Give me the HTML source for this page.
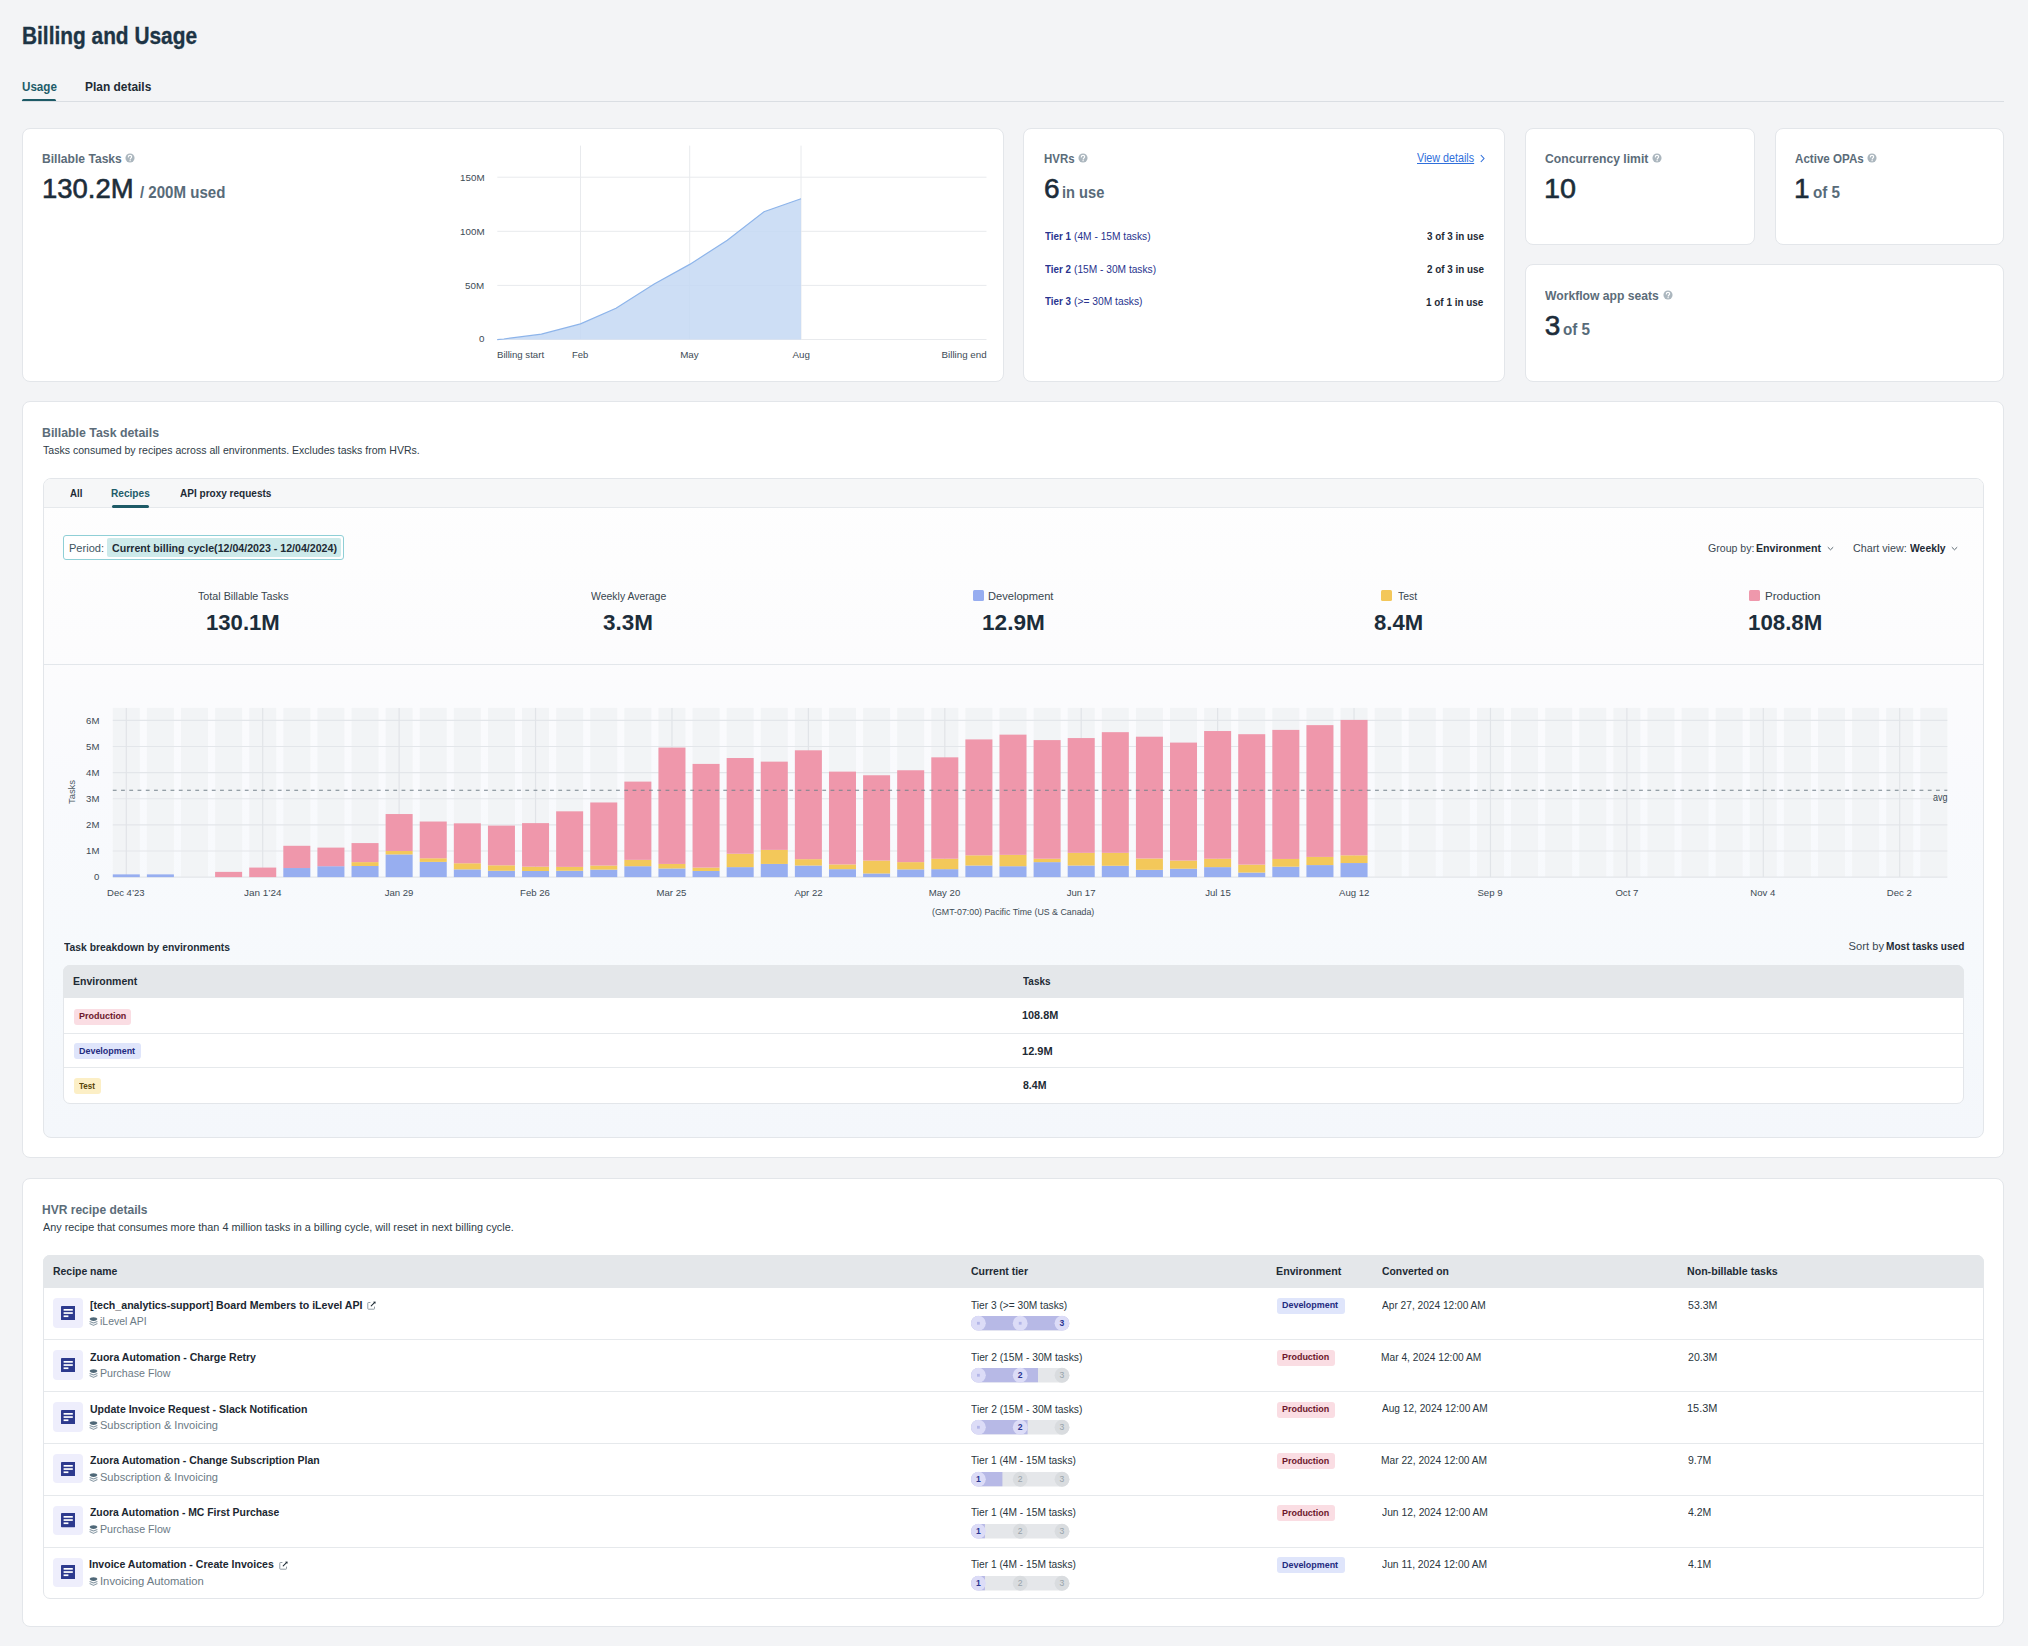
<!DOCTYPE html>
<html><head><meta charset="utf-8"><title>Billing and Usage</title>
<style>
html,body{margin:0;padding:0;}
body{width:2028px;height:1646px;position:relative;overflow:hidden;background:#f3f4f6;font-family:"Liberation Sans",sans-serif;}
.t{position:absolute;white-space:pre;line-height:1;transform-origin:0 0;}
</style></head><body>
<div style="position:absolute;left:22px;top:98.5px;width:33.5px;height:3.0px;background:#1d5a66;border-radius:2px"></div>
<div style="position:absolute;left:22px;top:101px;width:1982px;height:1px;background:#dadee3"></div>
<div style="position:absolute;left:22px;top:128px;width:982px;height:254px;background:#fff;border:1px solid #e3e6ea;border-radius:8px;box-sizing:border-box"></div>
<div style="position:absolute;left:1023px;top:128px;width:482px;height:254px;background:#fff;border:1px solid #e3e6ea;border-radius:8px;box-sizing:border-box"></div>
<div style="position:absolute;left:1525px;top:128px;width:230px;height:117px;background:#fff;border:1px solid #e3e6ea;border-radius:8px;box-sizing:border-box"></div>
<div style="position:absolute;left:1775px;top:128px;width:229px;height:117px;background:#fff;border:1px solid #e3e6ea;border-radius:8px;box-sizing:border-box"></div>
<div style="position:absolute;left:1525px;top:264px;width:479px;height:118px;background:#fff;border:1px solid #e3e6ea;border-radius:8px;box-sizing:border-box"></div>
<svg style="position:absolute;left:125px;top:152.9px" width="10" height="10" viewBox="0 0 10 10"><circle cx="5" cy="5" r="4.55" fill="#abb6be"/><path d="M3.3 3.9C3.3 2.9 4.1 2.3 5 2.3C5.9 2.3 6.7 2.9 6.7 3.8C6.7 4.9 5.2 5 5.2 6.1" stroke="#fff" stroke-width="1.15" fill="none" stroke-linecap="round"/><circle cx="5.1" cy="7.65" r=".7" fill="#fff"/></svg>
<svg style="position:absolute;left:0;top:0" width="2028" height="400"><line x1="497.3" y1="177.2" x2="986.5" y2="177.2" stroke="#e8eaed" stroke-width="1"/><line x1="497.3" y1="231.3" x2="986.5" y2="231.3" stroke="#e8eaed" stroke-width="1"/><line x1="497.3" y1="285.4" x2="986.5" y2="285.4" stroke="#e8eaed" stroke-width="1"/><line x1="497.3" y1="339.5" x2="986.5" y2="339.5" stroke="#e8eaed" stroke-width="1"/><line x1="580.5" y1="145.6" x2="580.5" y2="339.5" stroke="#e8eaed" stroke-width="1"/><line x1="689.7" y1="145.6" x2="689.7" y2="339.5" stroke="#e8eaed" stroke-width="1"/><line x1="801.0" y1="145.6" x2="801.0" y2="339.5" stroke="#e8eaed" stroke-width="1"/><path d="M497.2,339.6 L503.8,339.0 L541.4,334.2 L580.5,323.9 L616.0,308.3 L654.2,283.9 L689.7,264.4 L727.3,240.3 L764.0,211.7 L801.0,198.8 L801,339.5 L497.2,339.5 Z" fill="#c4d8f3" fill-opacity="0.85"/><path d="M497.2,339.6 L503.8,339.0 L541.4,334.2 L580.5,323.9 L616.0,308.3 L654.2,283.9 L689.7,264.4 L727.3,240.3 L764.0,211.7 L801.0,198.8" fill="none" stroke="#8db4ea" stroke-width="1.2"/></svg>
<svg style="position:absolute;left:1078.2px;top:152.9px" width="10" height="10" viewBox="0 0 10 10"><circle cx="5" cy="5" r="4.55" fill="#abb6be"/><path d="M3.3 3.9C3.3 2.9 4.1 2.3 5 2.3C5.9 2.3 6.7 2.9 6.7 3.8C6.7 4.9 5.2 5 5.2 6.1" stroke="#fff" stroke-width="1.15" fill="none" stroke-linecap="round"/><circle cx="5.1" cy="7.65" r=".7" fill="#fff"/></svg>
<svg style="position:absolute;left:1478.5px;top:154px" width="7" height="9" viewBox="0 0 7 9"><path d="M1.8 1 L5 4.5 L1.8 8" stroke="#2f6fdb" stroke-width="1.1" fill="none"/></svg>
<svg style="position:absolute;left:1652.2px;top:152.9px" width="10" height="10" viewBox="0 0 10 10"><circle cx="5" cy="5" r="4.55" fill="#abb6be"/><path d="M3.3 3.9C3.3 2.9 4.1 2.3 5 2.3C5.9 2.3 6.7 2.9 6.7 3.8C6.7 4.9 5.2 5 5.2 6.1" stroke="#fff" stroke-width="1.15" fill="none" stroke-linecap="round"/><circle cx="5.1" cy="7.65" r=".7" fill="#fff"/></svg>
<svg style="position:absolute;left:1867px;top:152.9px" width="10" height="10" viewBox="0 0 10 10"><circle cx="5" cy="5" r="4.55" fill="#abb6be"/><path d="M3.3 3.9C3.3 2.9 4.1 2.3 5 2.3C5.9 2.3 6.7 2.9 6.7 3.8C6.7 4.9 5.2 5 5.2 6.1" stroke="#fff" stroke-width="1.15" fill="none" stroke-linecap="round"/><circle cx="5.1" cy="7.65" r=".7" fill="#fff"/></svg>
<svg style="position:absolute;left:1662.5px;top:289.79999999999995px" width="10" height="10" viewBox="0 0 10 10"><circle cx="5" cy="5" r="4.55" fill="#abb6be"/><path d="M3.3 3.9C3.3 2.9 4.1 2.3 5 2.3C5.9 2.3 6.7 2.9 6.7 3.8C6.7 4.9 5.2 5 5.2 6.1" stroke="#fff" stroke-width="1.15" fill="none" stroke-linecap="round"/><circle cx="5.1" cy="7.65" r=".7" fill="#fff"/></svg>
<div style="position:absolute;left:22px;top:401px;width:1982px;height:757px;background:#fff;border:1px solid #e3e6ea;border-radius:8px;box-sizing:border-box"></div>
<div style="position:absolute;left:42.8px;top:478px;width:1941.5px;height:660px;border:1px solid #e3e6ea;border-radius:8px;box-sizing:border-box;background:linear-gradient(180deg,#fefefe 0%,#fcfcfd 25%,#f9fafd 45%,#f6f9fc 75%,#f4f7fb 100%);overflow:hidden"></div>
<div style="position:absolute;left:43.8px;top:479px;width:1939.5px;height:29px;background:#f6f7f8;border-radius:7px 7px 0 0;border-bottom:1px solid #e6e9ec;box-sizing:border-box"></div>
<div style="position:absolute;left:111.9px;top:505.1px;width:37.29999999999998px;height:2.5px;background:#1d5a66;border-radius:2px"></div>
<div style="position:absolute;left:63.4px;top:534.7px;width:281.1px;height:25.699999999999932px;border:1px solid #8fcfd6;border-radius:3px;background:#fff;box-sizing:border-box"></div>
<div style="position:absolute;left:107px;top:537.9px;width:234.2px;height:19.5px;background:#cdeaea;border-radius:2px"></div>
<svg style="position:absolute;left:1826.7px;top:546px" width="7" height="5" viewBox="0 0 7 5"><path d="M0.8 1.2 L3.5 3.8 L6.2 1.2" stroke="#5a6770" stroke-width="1" fill="none"/></svg>
<svg style="position:absolute;left:1951.1px;top:546px" width="7" height="5" viewBox="0 0 7 5"><path d="M0.8 1.2 L3.5 3.8 L6.2 1.2" stroke="#5a6770" stroke-width="1" fill="none"/></svg>
<div style="position:absolute;left:973.3px;top:590.1px;width:11.200000000000045px;height:11.199999999999932px;background:#97adf0;border-radius:1.5px"></div>
<div style="position:absolute;left:1381.2px;top:590.1px;width:11.200000000000045px;height:11.199999999999932px;background:#f3c75a;border-radius:1.5px"></div>
<div style="position:absolute;left:1749.3px;top:590.1px;width:11.200000000000045px;height:11.199999999999932px;background:#ef98ac;border-radius:1.5px"></div>
<div style="position:absolute;left:43.8px;top:663.5px;width:1939.5px;height:1.2999999999999545px;background:#e3e7eb"></div>
<svg style="position:absolute;left:0;top:0" width="2028" height="1000"><rect x="112.80" y="707.9" width="27.0" height="169.20" fill="#f2f4f6"/><rect x="146.90" y="707.9" width="27.0" height="169.20" fill="#f2f4f6"/><rect x="181.01" y="707.9" width="27.0" height="169.20" fill="#f2f4f6"/><rect x="215.11" y="707.9" width="27.0" height="169.20" fill="#f2f4f6"/><rect x="249.22" y="707.9" width="27.0" height="169.20" fill="#f2f4f6"/><rect x="283.32" y="707.9" width="27.0" height="169.20" fill="#f2f4f6"/><rect x="317.42" y="707.9" width="27.0" height="169.20" fill="#f2f4f6"/><rect x="351.53" y="707.9" width="27.0" height="169.20" fill="#f2f4f6"/><rect x="385.63" y="707.9" width="27.0" height="169.20" fill="#f2f4f6"/><rect x="419.74" y="707.9" width="27.0" height="169.20" fill="#f2f4f6"/><rect x="453.84" y="707.9" width="27.0" height="169.20" fill="#f2f4f6"/><rect x="487.94" y="707.9" width="27.0" height="169.20" fill="#f2f4f6"/><rect x="522.05" y="707.9" width="27.0" height="169.20" fill="#f2f4f6"/><rect x="556.15" y="707.9" width="27.0" height="169.20" fill="#f2f4f6"/><rect x="590.26" y="707.9" width="27.0" height="169.20" fill="#f2f4f6"/><rect x="624.36" y="707.9" width="27.0" height="169.20" fill="#f2f4f6"/><rect x="658.46" y="707.9" width="27.0" height="169.20" fill="#f2f4f6"/><rect x="692.57" y="707.9" width="27.0" height="169.20" fill="#f2f4f6"/><rect x="726.67" y="707.9" width="27.0" height="169.20" fill="#f2f4f6"/><rect x="760.78" y="707.9" width="27.0" height="169.20" fill="#f2f4f6"/><rect x="794.88" y="707.9" width="27.0" height="169.20" fill="#f2f4f6"/><rect x="828.98" y="707.9" width="27.0" height="169.20" fill="#f2f4f6"/><rect x="863.09" y="707.9" width="27.0" height="169.20" fill="#f2f4f6"/><rect x="897.19" y="707.9" width="27.0" height="169.20" fill="#f2f4f6"/><rect x="931.30" y="707.9" width="27.0" height="169.20" fill="#f2f4f6"/><rect x="965.40" y="707.9" width="27.0" height="169.20" fill="#f2f4f6"/><rect x="999.50" y="707.9" width="27.0" height="169.20" fill="#f2f4f6"/><rect x="1033.61" y="707.9" width="27.0" height="169.20" fill="#f2f4f6"/><rect x="1067.71" y="707.9" width="27.0" height="169.20" fill="#f2f4f6"/><rect x="1101.82" y="707.9" width="27.0" height="169.20" fill="#f2f4f6"/><rect x="1135.92" y="707.9" width="27.0" height="169.20" fill="#f2f4f6"/><rect x="1170.02" y="707.9" width="27.0" height="169.20" fill="#f2f4f6"/><rect x="1204.13" y="707.9" width="27.0" height="169.20" fill="#f2f4f6"/><rect x="1238.23" y="707.9" width="27.0" height="169.20" fill="#f2f4f6"/><rect x="1272.34" y="707.9" width="27.0" height="169.20" fill="#f2f4f6"/><rect x="1306.44" y="707.9" width="27.0" height="169.20" fill="#f2f4f6"/><rect x="1340.54" y="707.9" width="27.0" height="169.20" fill="#f2f4f6"/><rect x="1374.65" y="707.9" width="27.0" height="169.20" fill="#f2f4f6"/><rect x="1408.75" y="707.9" width="27.0" height="169.20" fill="#f2f4f6"/><rect x="1442.86" y="707.9" width="27.0" height="169.20" fill="#f2f4f6"/><rect x="1476.96" y="707.9" width="27.0" height="169.20" fill="#f2f4f6"/><rect x="1511.06" y="707.9" width="27.0" height="169.20" fill="#f2f4f6"/><rect x="1545.17" y="707.9" width="27.0" height="169.20" fill="#f2f4f6"/><rect x="1579.27" y="707.9" width="27.0" height="169.20" fill="#f2f4f6"/><rect x="1613.38" y="707.9" width="27.0" height="169.20" fill="#f2f4f6"/><rect x="1647.48" y="707.9" width="27.0" height="169.20" fill="#f2f4f6"/><rect x="1681.58" y="707.9" width="27.0" height="169.20" fill="#f2f4f6"/><rect x="1715.69" y="707.9" width="27.0" height="169.20" fill="#f2f4f6"/><rect x="1749.79" y="707.9" width="27.0" height="169.20" fill="#f2f4f6"/><rect x="1783.90" y="707.9" width="27.0" height="169.20" fill="#f2f4f6"/><rect x="1818.00" y="707.9" width="27.0" height="169.20" fill="#f2f4f6"/><rect x="1852.10" y="707.9" width="27.0" height="169.20" fill="#f2f4f6"/><rect x="1886.21" y="707.9" width="27.0" height="169.20" fill="#f2f4f6"/><rect x="1920.31" y="707.9" width="27.0" height="169.20" fill="#f2f4f6"/><line x1="112.80" y1="877.10" x2="1947.31" y2="877.10" stroke="#e3e6ea" stroke-width="1.2"/><line x1="112.80" y1="850.98" x2="1947.31" y2="850.98" stroke="#e3e6ea" stroke-width="1.2"/><line x1="112.80" y1="824.86" x2="1947.31" y2="824.86" stroke="#e3e6ea" stroke-width="1.2"/><line x1="112.80" y1="798.74" x2="1947.31" y2="798.74" stroke="#e3e6ea" stroke-width="1.2"/><line x1="112.80" y1="772.62" x2="1947.31" y2="772.62" stroke="#e3e6ea" stroke-width="1.2"/><line x1="112.80" y1="746.50" x2="1947.31" y2="746.50" stroke="#e3e6ea" stroke-width="1.2"/><line x1="112.80" y1="720.38" x2="1947.31" y2="720.38" stroke="#e3e6ea" stroke-width="1.2"/><line x1="126.30" y1="707.9" x2="126.30" y2="877.1" stroke="#e1e4e8" stroke-width="1.2"/><line x1="262.72" y1="707.9" x2="262.72" y2="877.1" stroke="#e1e4e8" stroke-width="1.2"/><line x1="399.13" y1="707.9" x2="399.13" y2="877.1" stroke="#e1e4e8" stroke-width="1.2"/><line x1="535.55" y1="707.9" x2="535.55" y2="877.1" stroke="#e1e4e8" stroke-width="1.2"/><line x1="671.96" y1="707.9" x2="671.96" y2="877.1" stroke="#e1e4e8" stroke-width="1.2"/><line x1="808.38" y1="707.9" x2="808.38" y2="877.1" stroke="#e1e4e8" stroke-width="1.2"/><line x1="944.80" y1="707.9" x2="944.80" y2="877.1" stroke="#e1e4e8" stroke-width="1.2"/><line x1="1081.21" y1="707.9" x2="1081.21" y2="877.1" stroke="#e1e4e8" stroke-width="1.2"/><line x1="1217.63" y1="707.9" x2="1217.63" y2="877.1" stroke="#e1e4e8" stroke-width="1.2"/><line x1="1354.04" y1="707.9" x2="1354.04" y2="877.1" stroke="#e1e4e8" stroke-width="1.2"/><line x1="1490.46" y1="707.9" x2="1490.46" y2="877.1" stroke="#e1e4e8" stroke-width="1.2"/><line x1="1626.88" y1="707.9" x2="1626.88" y2="877.1" stroke="#e1e4e8" stroke-width="1.2"/><line x1="1763.29" y1="707.9" x2="1763.29" y2="877.1" stroke="#e1e4e8" stroke-width="1.2"/><line x1="1899.71" y1="707.9" x2="1899.71" y2="877.1" stroke="#e1e4e8" stroke-width="1.2"/><rect x="112.80" y="874.38" width="27.0" height="2.72" fill="#97aef0"/><rect x="146.90" y="874.38" width="27.0" height="2.72" fill="#97aef0"/><rect x="215.11" y="871.88" width="27.0" height="5.22" fill="#ef97ab"/><rect x="249.22" y="867.57" width="27.0" height="9.53" fill="#ef97ab"/><rect x="283.32" y="868.03" width="27.0" height="9.07" fill="#97aef0"/><rect x="283.32" y="845.80" width="27.0" height="22.23" fill="#ef97ab"/><rect x="317.42" y="866.21" width="27.0" height="10.89" fill="#97aef0"/><rect x="317.42" y="847.61" width="27.0" height="18.60" fill="#ef97ab"/><rect x="351.53" y="865.99" width="27.0" height="11.11" fill="#97aef0"/><rect x="351.53" y="862.13" width="27.0" height="3.86" fill="#f3c85a"/><rect x="351.53" y="843.08" width="27.0" height="19.05" fill="#ef97ab"/><rect x="385.63" y="854.42" width="27.0" height="22.68" fill="#97aef0"/><rect x="385.63" y="851.02" width="27.0" height="3.40" fill="#f3c85a"/><rect x="385.63" y="814.04" width="27.0" height="36.97" fill="#ef97ab"/><rect x="419.74" y="861.90" width="27.0" height="15.20" fill="#97aef0"/><rect x="419.74" y="858.27" width="27.0" height="3.63" fill="#f3c85a"/><rect x="419.74" y="821.53" width="27.0" height="36.75" fill="#ef97ab"/><rect x="453.84" y="869.39" width="27.0" height="7.71" fill="#97aef0"/><rect x="453.84" y="863.26" width="27.0" height="6.12" fill="#f3c85a"/><rect x="453.84" y="823.34" width="27.0" height="39.92" fill="#ef97ab"/><rect x="487.94" y="870.75" width="27.0" height="6.35" fill="#97aef0"/><rect x="487.94" y="865.31" width="27.0" height="5.44" fill="#f3c85a"/><rect x="487.94" y="825.61" width="27.0" height="39.69" fill="#ef97ab"/><rect x="522.05" y="870.98" width="27.0" height="6.12" fill="#97aef0"/><rect x="522.05" y="866.67" width="27.0" height="4.31" fill="#f3c85a"/><rect x="522.05" y="823.12" width="27.0" height="43.55" fill="#ef97ab"/><rect x="556.15" y="870.75" width="27.0" height="6.35" fill="#97aef0"/><rect x="556.15" y="866.89" width="27.0" height="3.86" fill="#f3c85a"/><rect x="556.15" y="811.32" width="27.0" height="55.57" fill="#ef97ab"/><rect x="590.26" y="869.61" width="27.0" height="7.49" fill="#97aef0"/><rect x="590.26" y="865.53" width="27.0" height="4.08" fill="#f3c85a"/><rect x="590.26" y="802.47" width="27.0" height="63.06" fill="#ef97ab"/><rect x="624.36" y="866.21" width="27.0" height="10.89" fill="#97aef0"/><rect x="624.36" y="859.86" width="27.0" height="6.35" fill="#f3c85a"/><rect x="624.36" y="781.61" width="27.0" height="78.25" fill="#ef97ab"/><rect x="658.46" y="868.48" width="27.0" height="8.62" fill="#97aef0"/><rect x="658.46" y="863.94" width="27.0" height="4.54" fill="#f3c85a"/><rect x="658.46" y="747.58" width="27.0" height="116.36" fill="#ef97ab"/><rect x="692.57" y="870.98" width="27.0" height="6.12" fill="#97aef0"/><rect x="692.57" y="867.57" width="27.0" height="3.40" fill="#f3c85a"/><rect x="692.57" y="763.91" width="27.0" height="103.66" fill="#ef97ab"/><rect x="726.67" y="867.12" width="27.0" height="9.98" fill="#97aef0"/><rect x="726.67" y="853.74" width="27.0" height="13.38" fill="#f3c85a"/><rect x="726.67" y="758.02" width="27.0" height="95.72" fill="#ef97ab"/><rect x="760.78" y="863.94" width="27.0" height="13.16" fill="#97aef0"/><rect x="760.78" y="849.88" width="27.0" height="14.06" fill="#f3c85a"/><rect x="760.78" y="761.65" width="27.0" height="88.23" fill="#ef97ab"/><rect x="794.88" y="865.53" width="27.0" height="11.57" fill="#97aef0"/><rect x="794.88" y="859.18" width="27.0" height="6.35" fill="#f3c85a"/><rect x="794.88" y="750.31" width="27.0" height="108.88" fill="#ef97ab"/><rect x="828.98" y="869.16" width="27.0" height="7.94" fill="#97aef0"/><rect x="828.98" y="864.40" width="27.0" height="4.76" fill="#f3c85a"/><rect x="828.98" y="771.63" width="27.0" height="92.77" fill="#ef97ab"/><rect x="863.09" y="873.47" width="27.0" height="3.63" fill="#97aef0"/><rect x="863.09" y="860.54" width="27.0" height="12.93" fill="#f3c85a"/><rect x="863.09" y="775.26" width="27.0" height="85.29" fill="#ef97ab"/><rect x="897.19" y="869.39" width="27.0" height="7.71" fill="#97aef0"/><rect x="897.19" y="862.13" width="27.0" height="7.26" fill="#f3c85a"/><rect x="897.19" y="770.27" width="27.0" height="91.86" fill="#ef97ab"/><rect x="931.30" y="869.16" width="27.0" height="7.94" fill="#97aef0"/><rect x="931.30" y="858.73" width="27.0" height="10.43" fill="#f3c85a"/><rect x="931.30" y="757.34" width="27.0" height="101.39" fill="#ef97ab"/><rect x="965.40" y="865.53" width="27.0" height="11.57" fill="#97aef0"/><rect x="965.40" y="855.32" width="27.0" height="10.21" fill="#f3c85a"/><rect x="965.40" y="739.42" width="27.0" height="115.91" fill="#ef97ab"/><rect x="999.50" y="866.21" width="27.0" height="10.89" fill="#97aef0"/><rect x="999.50" y="854.87" width="27.0" height="11.34" fill="#f3c85a"/><rect x="999.50" y="734.65" width="27.0" height="120.22" fill="#ef97ab"/><rect x="1033.61" y="862.13" width="27.0" height="14.97" fill="#97aef0"/><rect x="1033.61" y="858.73" width="27.0" height="3.40" fill="#f3c85a"/><rect x="1033.61" y="740.10" width="27.0" height="118.63" fill="#ef97ab"/><rect x="1067.71" y="865.53" width="27.0" height="11.57" fill="#97aef0"/><rect x="1067.71" y="852.83" width="27.0" height="12.70" fill="#f3c85a"/><rect x="1067.71" y="738.06" width="27.0" height="114.77" fill="#ef97ab"/><rect x="1101.82" y="865.76" width="27.0" height="11.34" fill="#97aef0"/><rect x="1101.82" y="852.83" width="27.0" height="12.93" fill="#f3c85a"/><rect x="1101.82" y="732.16" width="27.0" height="120.67" fill="#ef97ab"/><rect x="1135.92" y="869.84" width="27.0" height="7.26" fill="#97aef0"/><rect x="1135.92" y="858.50" width="27.0" height="11.34" fill="#f3c85a"/><rect x="1135.92" y="736.70" width="27.0" height="121.80" fill="#ef97ab"/><rect x="1170.02" y="868.71" width="27.0" height="8.39" fill="#97aef0"/><rect x="1170.02" y="860.54" width="27.0" height="8.17" fill="#f3c85a"/><rect x="1170.02" y="742.59" width="27.0" height="117.95" fill="#ef97ab"/><rect x="1204.13" y="867.12" width="27.0" height="9.98" fill="#97aef0"/><rect x="1204.13" y="858.73" width="27.0" height="8.39" fill="#f3c85a"/><rect x="1204.13" y="731.03" width="27.0" height="127.70" fill="#ef97ab"/><rect x="1238.23" y="872.56" width="27.0" height="4.54" fill="#97aef0"/><rect x="1238.23" y="864.62" width="27.0" height="7.94" fill="#f3c85a"/><rect x="1238.23" y="734.20" width="27.0" height="130.42" fill="#ef97ab"/><rect x="1272.34" y="866.67" width="27.0" height="10.43" fill="#97aef0"/><rect x="1272.34" y="858.95" width="27.0" height="7.71" fill="#f3c85a"/><rect x="1272.34" y="729.89" width="27.0" height="129.06" fill="#ef97ab"/><rect x="1306.44" y="865.08" width="27.0" height="12.02" fill="#97aef0"/><rect x="1306.44" y="856.91" width="27.0" height="8.17" fill="#f3c85a"/><rect x="1306.44" y="725.13" width="27.0" height="131.78" fill="#ef97ab"/><rect x="1340.54" y="863.04" width="27.0" height="14.06" fill="#97aef0"/><rect x="1340.54" y="855.32" width="27.0" height="7.71" fill="#f3c85a"/><rect x="1340.54" y="719.91" width="27.0" height="135.41" fill="#ef97ab"/><line x1="112.80" y1="790.2" x2="1947.31" y2="790.2" stroke="#75828c" stroke-width="1.1" stroke-dasharray="3.8 4.45"/></svg>
<div style="position:absolute;left:72.4px;top:792px;width:0;height:0"><div style="position:absolute;transform:translate(-50%,-50%) rotate(-90deg);font-size:9.5px;color:#4a5761;white-space:nowrap;line-height:1;letter-spacing:-0.1px">Tasks</div></div>
<div style="position:absolute;left:63.1px;top:964.6px;width:1900.9px;height:139.60000000000002px;background:#fff;border:1px solid #e3e6ea;border-radius:7px;box-sizing:border-box;overflow:hidden"></div>
<div style="position:absolute;left:63.1px;top:964.6px;width:1900.9px;height:33.0px;background:#e4e7ea;border-radius:7px 7px 0 0"></div>
<div style="position:absolute;left:64.1px;top:1032.5px;width:1898.9px;height:1.199999999999818px;background:#e6e9ec"></div>
<div style="position:absolute;left:64.1px;top:1067.3000000000002px;width:1898.9px;height:1.199999999999818px;background:#e6e9ec"></div>
<div style="position:absolute;left:73.9px;top:1008.5px;width:57.5px;height:16.09999999999991px;background:#fadde3;border-radius:3px"></div>
<div style="position:absolute;left:73.9px;top:1043.0px;width:67.29999999999998px;height:16.09999999999991px;background:#dfe5fb;border-radius:3px"></div>
<div style="position:absolute;left:73.9px;top:1078.3px;width:27.299999999999997px;height:16.09999999999991px;background:#fcefc6;border-radius:3px"></div>
<div style="position:absolute;left:22px;top:1178px;width:1982px;height:449px;background:#fff;border:1px solid #e3e6ea;border-radius:8px;box-sizing:border-box"></div>
<div style="position:absolute;left:42.9px;top:1254.6px;width:1941.6px;height:344.60000000000014px;background:#fff;border:1px solid #e3e6ea;border-radius:7px;box-sizing:border-box;overflow:hidden"></div>
<div style="position:absolute;left:42.9px;top:1254.6px;width:1941.6px;height:33.100000000000136px;background:#e4e7ea;border-radius:7px 7px 0 0"></div>
<div style="position:absolute;left:43.9px;top:1339.0000000000002px;width:1939.6px;height:1.199999999999818px;background:#e6e9ec"></div>
<div style="position:absolute;left:43.9px;top:1390.9px;width:1939.6px;height:1.199999999999818px;background:#e6e9ec"></div>
<div style="position:absolute;left:43.9px;top:1442.8000000000002px;width:1939.6px;height:1.199999999999818px;background:#e6e9ec"></div>
<div style="position:absolute;left:43.9px;top:1494.7px;width:1939.6px;height:1.199999999999818px;background:#e6e9ec"></div>
<div style="position:absolute;left:43.9px;top:1546.6000000000001px;width:1939.6px;height:1.199999999999818px;background:#e6e9ec"></div>
<div style="position:absolute;left:53.3px;top:1298.2px;width:29.5px;height:29.5px;background:#eeeefc;border-radius:4px"></div>
<svg style="position:absolute;left:60.699999999999996px;top:1305.8px" width="14.4" height="14.2" viewBox="0 0 14.4 14.2"><rect x="0" y="0" width="14.4" height="14.2" rx="0.8" fill="#2d3a8e"/><rect x="2.6" y="3.0" width="9.2" height="1.7" fill="#fff"/><rect x="2.6" y="6.2" width="9.2" height="1.7" fill="#fff"/><rect x="2.6" y="9.4" width="4.8" height="1.7" fill="#fff"/></svg>
<svg style="position:absolute;left:367.3px;top:1301.2px" width="9" height="9" viewBox="0 0 9 9"><path d="M3.4 1.5H1.4a0.6 0.6 0 0 0-0.6 0.6V7.6a0.6 0.6 0 0 0 0.6 0.6H6.9a0.6 0.6 0 0 0 0.6-0.6V5.6" stroke="#8f9aa3" stroke-width="1" fill="none"/><path d="M4.2 4.9L8 1.1" stroke="#1f2c36" stroke-width="1.05" fill="none" stroke-linecap="round"/><path d="M6.0 0.7H8.4V3.1Z" fill="#1f2c36"/></svg>
<svg style="position:absolute;left:89.2px;top:1317.0px" width="9" height="9.4" viewBox="0 0 9 9.4"><path d="M4.5 0.3C6.6 0.3 8.4 1.3 8.4 2.1C8.4 2.9 6.6 3.9 4.5 3.9C2.4 3.9 0.6 2.9 0.6 2.1C0.6 1.3 2.4 0.3 4.5 0.3Z" fill="#4f6878"/><path d="M0.6 4.4L4.5 6.1L8.4 4.4M0.6 6.6L4.5 8.4L8.4 6.6" stroke="#8798a4" stroke-width="1.05" fill="none" stroke-linejoin="round"/></svg>
<svg style="position:absolute;left:971.0px;top:1316.2px;overflow:visible" width="98.4" height="14.5" viewBox="0 0 98.4 14.5"><rect x="0" y="0" width="98.4" height="14.5" rx="7.25" fill="#e5e7ea"/><clipPath id="c1316"><rect x="0" y="0" width="98.4" height="14.5" rx="7.25"/></clipPath><rect x="0" y="0" width="98.4" height="14.5" fill="#b7b9e6" clip-path="url(#c1316)"/><circle cx="7.4" cy="7.25" r="7.4" fill="#dcdcf7"/><rect x="6.0" y="5.85" width="2.8" height="2.8" fill="#b3b6e8"/><circle cx="49.2" cy="7.25" r="7.4" fill="#dcdcf7"/><rect x="47.800000000000004" y="5.85" width="2.8" height="2.8" fill="#b3b6e8"/><circle cx="91.00000000000001" cy="7.25" r="7.4" fill="#dcdcf7"/><text x="91.00000000000001" y="10.25" text-anchor="middle" font-family="Liberation Sans" font-size="8.6" font-weight="700" fill="#2a3592">3</text></svg>
<div style="position:absolute;left:1277.3px;top:1297.7px;width:67.29999999999995px;height:16.09999999999991px;background:#dfe5fb;border-radius:3px"></div>
<div style="position:absolute;left:53.3px;top:1350.1000000000001px;width:29.5px;height:29.5px;background:#eeeefc;border-radius:4px"></div>
<svg style="position:absolute;left:60.699999999999996px;top:1357.7px" width="14.4" height="14.2" viewBox="0 0 14.4 14.2"><rect x="0" y="0" width="14.4" height="14.2" rx="0.8" fill="#2d3a8e"/><rect x="2.6" y="3.0" width="9.2" height="1.7" fill="#fff"/><rect x="2.6" y="6.2" width="9.2" height="1.7" fill="#fff"/><rect x="2.6" y="9.4" width="4.8" height="1.7" fill="#fff"/></svg>
<svg style="position:absolute;left:89.2px;top:1368.9px" width="9" height="9.4" viewBox="0 0 9 9.4"><path d="M4.5 0.3C6.6 0.3 8.4 1.3 8.4 2.1C8.4 2.9 6.6 3.9 4.5 3.9C2.4 3.9 0.6 2.9 0.6 2.1C0.6 1.3 2.4 0.3 4.5 0.3Z" fill="#4f6878"/><path d="M0.6 4.4L4.5 6.1L8.4 4.4M0.6 6.6L4.5 8.4L8.4 6.6" stroke="#8798a4" stroke-width="1.05" fill="none" stroke-linejoin="round"/></svg>
<svg style="position:absolute;left:971.0px;top:1368.1000000000001px;overflow:visible" width="98.4" height="14.5" viewBox="0 0 98.4 14.5"><rect x="0" y="0" width="98.4" height="14.5" rx="7.25" fill="#e5e7ea"/><clipPath id="c1368"><rect x="0" y="0" width="98.4" height="14.5" rx="7.25"/></clipPath><rect x="0" y="0" width="67.0" height="14.5" fill="#b7b9e6" clip-path="url(#c1368)"/><circle cx="7.4" cy="7.25" r="7.4" fill="#dcdcf7"/><rect x="6.0" y="5.85" width="2.8" height="2.8" fill="#b3b6e8"/><circle cx="49.2" cy="7.25" r="7.4" fill="#dcdcf7"/><text x="49.2" y="10.25" text-anchor="middle" font-family="Liberation Sans" font-size="8.6" font-weight="700" fill="#2a3592">2</text><circle cx="91.00000000000001" cy="7.25" r="7.4" fill="#d9dcdf"/><text x="91.00000000000001" y="10.25" text-anchor="middle" font-family="Liberation Sans" font-size="8.6" font-weight="400" fill="#98a3ab">3</text></svg>
<div style="position:absolute;left:1277.3px;top:1349.6000000000001px;width:57.40000000000009px;height:16.09999999999991px;background:#fadde3;border-radius:3px"></div>
<div style="position:absolute;left:53.3px;top:1402.0px;width:29.5px;height:29.5px;background:#eeeefc;border-radius:4px"></div>
<svg style="position:absolute;left:60.699999999999996px;top:1409.6px" width="14.4" height="14.2" viewBox="0 0 14.4 14.2"><rect x="0" y="0" width="14.4" height="14.2" rx="0.8" fill="#2d3a8e"/><rect x="2.6" y="3.0" width="9.2" height="1.7" fill="#fff"/><rect x="2.6" y="6.2" width="9.2" height="1.7" fill="#fff"/><rect x="2.6" y="9.4" width="4.8" height="1.7" fill="#fff"/></svg>
<svg style="position:absolute;left:89.2px;top:1420.8px" width="9" height="9.4" viewBox="0 0 9 9.4"><path d="M4.5 0.3C6.6 0.3 8.4 1.3 8.4 2.1C8.4 2.9 6.6 3.9 4.5 3.9C2.4 3.9 0.6 2.9 0.6 2.1C0.6 1.3 2.4 0.3 4.5 0.3Z" fill="#4f6878"/><path d="M0.6 4.4L4.5 6.1L8.4 4.4M0.6 6.6L4.5 8.4L8.4 6.6" stroke="#8798a4" stroke-width="1.05" fill="none" stroke-linejoin="round"/></svg>
<svg style="position:absolute;left:971.0px;top:1420.0px;overflow:visible" width="98.4" height="14.5" viewBox="0 0 98.4 14.5"><rect x="0" y="0" width="98.4" height="14.5" rx="7.25" fill="#e5e7ea"/><clipPath id="c1420"><rect x="0" y="0" width="98.4" height="14.5" rx="7.25"/></clipPath><rect x="0" y="0" width="56.6" height="14.5" fill="#b7b9e6" clip-path="url(#c1420)"/><circle cx="7.4" cy="7.25" r="7.4" fill="#dcdcf7"/><rect x="6.0" y="5.85" width="2.8" height="2.8" fill="#b3b6e8"/><circle cx="49.2" cy="7.25" r="7.4" fill="#dcdcf7"/><text x="49.2" y="10.25" text-anchor="middle" font-family="Liberation Sans" font-size="8.6" font-weight="700" fill="#2a3592">2</text><circle cx="91.00000000000001" cy="7.25" r="7.4" fill="#d9dcdf"/><text x="91.00000000000001" y="10.25" text-anchor="middle" font-family="Liberation Sans" font-size="8.6" font-weight="400" fill="#98a3ab">3</text></svg>
<div style="position:absolute;left:1277.3px;top:1401.5px;width:57.40000000000009px;height:16.09999999999991px;background:#fadde3;border-radius:3px"></div>
<div style="position:absolute;left:53.3px;top:1453.9px;width:29.5px;height:29.5px;background:#eeeefc;border-radius:4px"></div>
<svg style="position:absolute;left:60.699999999999996px;top:1461.5px" width="14.4" height="14.2" viewBox="0 0 14.4 14.2"><rect x="0" y="0" width="14.4" height="14.2" rx="0.8" fill="#2d3a8e"/><rect x="2.6" y="3.0" width="9.2" height="1.7" fill="#fff"/><rect x="2.6" y="6.2" width="9.2" height="1.7" fill="#fff"/><rect x="2.6" y="9.4" width="4.8" height="1.7" fill="#fff"/></svg>
<svg style="position:absolute;left:89.2px;top:1472.7px" width="9" height="9.4" viewBox="0 0 9 9.4"><path d="M4.5 0.3C6.6 0.3 8.4 1.3 8.4 2.1C8.4 2.9 6.6 3.9 4.5 3.9C2.4 3.9 0.6 2.9 0.6 2.1C0.6 1.3 2.4 0.3 4.5 0.3Z" fill="#4f6878"/><path d="M0.6 4.4L4.5 6.1L8.4 4.4M0.6 6.6L4.5 8.4L8.4 6.6" stroke="#8798a4" stroke-width="1.05" fill="none" stroke-linejoin="round"/></svg>
<svg style="position:absolute;left:971.0px;top:1471.9px;overflow:visible" width="98.4" height="14.5" viewBox="0 0 98.4 14.5"><rect x="0" y="0" width="98.4" height="14.5" rx="7.25" fill="#e5e7ea"/><clipPath id="c1471"><rect x="0" y="0" width="98.4" height="14.5" rx="7.25"/></clipPath><rect x="0" y="0" width="31.4" height="14.5" fill="#b7b9e6" clip-path="url(#c1471)"/><circle cx="7.4" cy="7.25" r="7.4" fill="#dcdcf7"/><text x="7.4" y="10.25" text-anchor="middle" font-family="Liberation Sans" font-size="8.6" font-weight="700" fill="#2a3592">1</text><circle cx="49.2" cy="7.25" r="7.4" fill="#d9dcdf"/><text x="49.2" y="10.25" text-anchor="middle" font-family="Liberation Sans" font-size="8.6" font-weight="400" fill="#98a3ab">2</text><circle cx="91.00000000000001" cy="7.25" r="7.4" fill="#d9dcdf"/><text x="91.00000000000001" y="10.25" text-anchor="middle" font-family="Liberation Sans" font-size="8.6" font-weight="400" fill="#98a3ab">3</text></svg>
<div style="position:absolute;left:1277.3px;top:1453.4px;width:57.40000000000009px;height:16.09999999999991px;background:#fadde3;border-radius:3px"></div>
<div style="position:absolute;left:53.3px;top:1505.8px;width:29.5px;height:29.5px;background:#eeeefc;border-radius:4px"></div>
<svg style="position:absolute;left:60.699999999999996px;top:1513.3999999999999px" width="14.4" height="14.2" viewBox="0 0 14.4 14.2"><rect x="0" y="0" width="14.4" height="14.2" rx="0.8" fill="#2d3a8e"/><rect x="2.6" y="3.0" width="9.2" height="1.7" fill="#fff"/><rect x="2.6" y="6.2" width="9.2" height="1.7" fill="#fff"/><rect x="2.6" y="9.4" width="4.8" height="1.7" fill="#fff"/></svg>
<svg style="position:absolute;left:89.2px;top:1524.6px" width="9" height="9.4" viewBox="0 0 9 9.4"><path d="M4.5 0.3C6.6 0.3 8.4 1.3 8.4 2.1C8.4 2.9 6.6 3.9 4.5 3.9C2.4 3.9 0.6 2.9 0.6 2.1C0.6 1.3 2.4 0.3 4.5 0.3Z" fill="#4f6878"/><path d="M0.6 4.4L4.5 6.1L8.4 4.4M0.6 6.6L4.5 8.4L8.4 6.6" stroke="#8798a4" stroke-width="1.05" fill="none" stroke-linejoin="round"/></svg>
<svg style="position:absolute;left:971.0px;top:1523.8px;overflow:visible" width="98.4" height="14.5" viewBox="0 0 98.4 14.5"><rect x="0" y="0" width="98.4" height="14.5" rx="7.25" fill="#e5e7ea"/><clipPath id="c1523"><rect x="0" y="0" width="98.4" height="14.5" rx="7.25"/></clipPath><rect x="0" y="0" width="13.9" height="14.5" fill="#b7b9e6" clip-path="url(#c1523)"/><circle cx="7.4" cy="7.25" r="7.4" fill="#dcdcf7"/><text x="7.4" y="10.25" text-anchor="middle" font-family="Liberation Sans" font-size="8.6" font-weight="700" fill="#2a3592">1</text><circle cx="49.2" cy="7.25" r="7.4" fill="#d9dcdf"/><text x="49.2" y="10.25" text-anchor="middle" font-family="Liberation Sans" font-size="8.6" font-weight="400" fill="#98a3ab">2</text><circle cx="91.00000000000001" cy="7.25" r="7.4" fill="#d9dcdf"/><text x="91.00000000000001" y="10.25" text-anchor="middle" font-family="Liberation Sans" font-size="8.6" font-weight="400" fill="#98a3ab">3</text></svg>
<div style="position:absolute;left:1277.3px;top:1505.3px;width:57.40000000000009px;height:16.09999999999991px;background:#fadde3;border-radius:3px"></div>
<div style="position:absolute;left:53.3px;top:1557.7px;width:29.5px;height:29.5px;background:#eeeefc;border-radius:4px"></div>
<svg style="position:absolute;left:60.699999999999996px;top:1565.3px" width="14.4" height="14.2" viewBox="0 0 14.4 14.2"><rect x="0" y="0" width="14.4" height="14.2" rx="0.8" fill="#2d3a8e"/><rect x="2.6" y="3.0" width="9.2" height="1.7" fill="#fff"/><rect x="2.6" y="6.2" width="9.2" height="1.7" fill="#fff"/><rect x="2.6" y="9.4" width="4.8" height="1.7" fill="#fff"/></svg>
<svg style="position:absolute;left:278.79999999999995px;top:1560.7px" width="9" height="9" viewBox="0 0 9 9"><path d="M3.4 1.5H1.4a0.6 0.6 0 0 0-0.6 0.6V7.6a0.6 0.6 0 0 0 0.6 0.6H6.9a0.6 0.6 0 0 0 0.6-0.6V5.6" stroke="#8f9aa3" stroke-width="1" fill="none"/><path d="M4.2 4.9L8 1.1" stroke="#1f2c36" stroke-width="1.05" fill="none" stroke-linecap="round"/><path d="M6.0 0.7H8.4V3.1Z" fill="#1f2c36"/></svg>
<svg style="position:absolute;left:89.2px;top:1576.5px" width="9" height="9.4" viewBox="0 0 9 9.4"><path d="M4.5 0.3C6.6 0.3 8.4 1.3 8.4 2.1C8.4 2.9 6.6 3.9 4.5 3.9C2.4 3.9 0.6 2.9 0.6 2.1C0.6 1.3 2.4 0.3 4.5 0.3Z" fill="#4f6878"/><path d="M0.6 4.4L4.5 6.1L8.4 4.4M0.6 6.6L4.5 8.4L8.4 6.6" stroke="#8798a4" stroke-width="1.05" fill="none" stroke-linejoin="round"/></svg>
<svg style="position:absolute;left:971.0px;top:1575.7px;overflow:visible" width="98.4" height="14.5" viewBox="0 0 98.4 14.5"><rect x="0" y="0" width="98.4" height="14.5" rx="7.25" fill="#e5e7ea"/><clipPath id="c1575"><rect x="0" y="0" width="98.4" height="14.5" rx="7.25"/></clipPath><rect x="0" y="0" width="13.9" height="14.5" fill="#b7b9e6" clip-path="url(#c1575)"/><circle cx="7.4" cy="7.25" r="7.4" fill="#dcdcf7"/><text x="7.4" y="10.25" text-anchor="middle" font-family="Liberation Sans" font-size="8.6" font-weight="700" fill="#2a3592">1</text><circle cx="49.2" cy="7.25" r="7.4" fill="#d9dcdf"/><text x="49.2" y="10.25" text-anchor="middle" font-family="Liberation Sans" font-size="8.6" font-weight="400" fill="#98a3ab">2</text><circle cx="91.00000000000001" cy="7.25" r="7.4" fill="#d9dcdf"/><text x="91.00000000000001" y="10.25" text-anchor="middle" font-family="Liberation Sans" font-size="8.6" font-weight="400" fill="#98a3ab">3</text></svg>
<div style="position:absolute;left:1277.3px;top:1557.2px;width:67.29999999999995px;height:16.09999999999991px;background:#dfe5fb;border-radius:3px"></div>
<div class="t" style="left:21.91px;top:25px;font-size:23.5px;font-weight:700;color:#1d3445;transform:scaleX(0.8877);-webkit-text-stroke:0.35px #1d3445">Billing and Usage</div>
<div class="t" style="left:21.54px;top:80px;font-size:13.5px;font-weight:600;color:#1d5c69;transform:scaleX(0.8615);">Usage</div>
<div class="t" style="left:85.42px;top:80px;font-size:13.5px;font-weight:600;color:#1e2b35;transform:scaleX(0.8838);">Plan details</div>
<div class="t" style="left:42.17px;top:152px;font-size:13px;font-weight:700;color:#5b6c79;transform:scaleX(0.9310);">Billable Tasks</div>
<div class="t" style="left:42.44px;top:175px;font-size:28px;font-weight:500;color:#1c2d3a;transform:scaleX(0.9809);-webkit-text-stroke:0.6px #1c2d3a">130.2M</div>
<div class="t" style="left:139.50px;top:184px;font-size:16.5px;font-weight:700;color:#586b79;transform:scaleX(0.9129);">/ 200M used</div>
<div class="t" style="left:460.10px;top:173px;font-size:9.8px;font-weight:400;color:#3d4b55;">150M</div>
<div class="t" style="left:460.10px;top:227px;font-size:9.8px;font-weight:400;color:#3d4b55;">100M</div>
<div class="t" style="left:465.10px;top:281px;font-size:9.8px;font-weight:400;color:#3d4b55;">50M</div>
<div class="t" style="left:479.10px;top:334px;font-size:9.8px;font-weight:400;color:#3d4b55;">0</div>
<div class="t" style="left:496.72px;top:350px;font-size:9.8px;font-weight:400;color:#3d4b55;transform:scaleX(0.9830);">Billing start</div>
<div class="t" style="left:571.78px;top:350px;font-size:9.8px;font-weight:400;color:#3d4b55;transform:scaleX(0.9688);">Feb</div>
<div class="t" style="left:680.20px;top:350px;font-size:9.8px;font-weight:400;color:#3d4b55;">May</div>
<div class="t" style="left:792.50px;top:350px;font-size:9.8px;font-weight:400;color:#3d4b55;">Aug</div>
<div class="t" style="left:941.50px;top:350px;font-size:9.8px;font-weight:400;color:#3d4b55;">Billing end</div>
<div class="t" style="left:1044.02px;top:152px;font-size:13px;font-weight:700;color:#5b6c79;transform:scaleX(0.8818);">HVRs</div>
<div class="t" style="left:1417.20px;top:152px;font-size:12px;font-weight:400;color:#2f6fdb;transform:scaleX(0.8953);text-decoration:underline;text-underline-offset:1px">View details</div>
<div class="t" style="left:1044.10px;top:175px;font-size:28px;font-weight:500;color:#1c2d3a;-webkit-text-stroke:0.6px #1c2d3a">6</div>
<div class="t" style="left:1062.24px;top:184px;font-size:17px;font-weight:700;color:#586b79;transform:scaleX(0.8625);">in use</div>
<div class="t" style="left:1044.70px;top:231px;font-size:11.2px;font-weight:700;color:#28338e;transform:scaleX(0.8767);">Tier 1</div>
<div class="t" style="left:1073.59px;top:231px;font-size:11.2px;font-weight:400;color:#28338e;transform:scaleX(0.9120);">(4M - 15M tasks)</div>
<div class="t" style="left:1044.70px;top:264px;font-size:11.2px;font-weight:700;color:#28338e;transform:scaleX(0.8767);">Tier 2</div>
<div class="t" style="left:1073.59px;top:264px;font-size:11.2px;font-weight:400;color:#28338e;transform:scaleX(0.9101);">(15M - 30M tasks)</div>
<div class="t" style="left:1044.70px;top:296px;font-size:11.2px;font-weight:700;color:#28338e;transform:scaleX(0.8767);">Tier 3</div>
<div class="t" style="left:1073.58px;top:296px;font-size:11.2px;font-weight:400;color:#28338e;transform:scaleX(0.9178);">(&gt;= 30M tasks)</div>
<div class="t" style="left:1426.50px;top:231px;font-size:11.2px;font-weight:600;color:#1e2a35;transform:scaleX(0.8815);">3 of 3 in use</div>
<div class="t" style="left:1426.50px;top:264px;font-size:11.2px;font-weight:600;color:#1e2a35;transform:scaleX(0.8815);">2 of 3 in use</div>
<div class="t" style="left:1426.11px;top:297px;font-size:11.2px;font-weight:600;color:#1e2a35;transform:scaleX(0.8875);">1 of 1 in use</div>
<div class="t" style="left:1545.40px;top:152px;font-size:13px;font-weight:700;color:#5b6c79;transform:scaleX(0.9351);">Concurrency limit</div>
<div class="t" style="left:1543.74px;top:175px;font-size:28px;font-weight:500;color:#1c2d3a;transform:scaleX(1.0286);-webkit-text-stroke:0.6px #1c2d3a">10</div>
<div class="t" style="left:1795.30px;top:152px;font-size:13px;font-weight:700;color:#5b6c79;transform:scaleX(0.8922);">Active OPAs</div>
<div class="t" style="left:1794.00px;top:175px;font-size:28px;font-weight:500;color:#1c2d3a;-webkit-text-stroke:0.6px #1c2d3a">1</div>
<div class="t" style="left:1813.10px;top:184px;font-size:17px;font-weight:700;color:#586b79;transform:scaleX(0.8966);">of 5</div>
<div class="t" style="left:1545.20px;top:289px;font-size:13px;font-weight:700;color:#5b6c79;transform:scaleX(0.9339);">Workflow app seats</div>
<div class="t" style="left:1544.80px;top:312px;font-size:28px;font-weight:500;color:#1c2d3a;-webkit-text-stroke:0.6px #1c2d3a">3</div>
<div class="t" style="left:1562.60px;top:321px;font-size:17px;font-weight:700;color:#586b79;transform:scaleX(0.8966);">of 5</div>
<div class="t" style="left:41.65px;top:426px;font-size:13px;font-weight:700;color:#5b6c79;transform:scaleX(0.9492);">Billable Task details</div>
<div class="t" style="left:42.60px;top:445px;font-size:11.5px;font-weight:400;color:#2e3c47;transform:scaleX(0.9168);">Tasks consumed by recipes across all environments. Excludes tasks from HVRs.</div>
<div class="t" style="left:69.60px;top:488px;font-size:11px;font-weight:600;color:#1e2b35;transform:scaleX(0.8786);">All</div>
<div class="t" style="left:111.28px;top:488px;font-size:11px;font-weight:600;color:#1d5c69;transform:scaleX(0.9195);">Recipes</div>
<div class="t" style="left:180.00px;top:488px;font-size:11px;font-weight:600;color:#1e2b35;transform:scaleX(0.9120);">API proxy requests</div>
<div class="t" style="left:69.04px;top:543px;font-size:11.5px;font-weight:400;color:#3d5561;transform:scaleX(0.9600);">Period:</div>
<div class="t" style="left:111.90px;top:543px;font-size:11.5px;font-weight:600;color:#1e2b35;transform:scaleX(0.9235);">Current billing cycle(12/04/2023 - 12/04/2024)</div>
<div class="t" style="left:1707.60px;top:543px;font-size:11.5px;font-weight:400;color:#3a4852;transform:scaleX(0.9200);">Group by:</div>
<div class="t" style="left:1755.97px;top:543px;font-size:11.5px;font-weight:700;color:#1e2b35;transform:scaleX(0.9261);">Environment</div>
<div class="t" style="left:1853.40px;top:543px;font-size:11.5px;font-weight:400;color:#3a4852;transform:scaleX(0.9333);">Chart view:</div>
<div class="t" style="left:1909.80px;top:543px;font-size:11.5px;font-weight:700;color:#1e2b35;transform:scaleX(0.9026);">Weekly</div>
<div class="t" style="left:197.50px;top:591px;font-size:11.5px;font-weight:400;color:#38464f;transform:scaleX(0.9340);">Total Billable Tasks</div>
<div class="t" style="left:206.17px;top:613px;font-size:21.5px;font-weight:700;color:#1c2d3a;transform:scaleX(1.0290);">130.1M</div>
<div class="t" style="left:590.60px;top:591px;font-size:11.5px;font-weight:400;color:#38464f;transform:scaleX(0.9098);">Weekly Average</div>
<div class="t" style="left:602.86px;top:613px;font-size:21.5px;font-weight:700;color:#1c2d3a;transform:scaleX(1.0435);">3.3M</div>
<div class="t" style="left:988.23px;top:591px;font-size:11.5px;font-weight:400;color:#38464f;transform:scaleX(0.9657);">Development</div>
<div class="t" style="left:982.35px;top:613px;font-size:21.5px;font-weight:700;color:#1c2d3a;transform:scaleX(1.0509);">12.9M</div>
<div class="t" style="left:1397.90px;top:591px;font-size:11.5px;font-weight:400;color:#38464f;transform:scaleX(0.9048);">Test</div>
<div class="t" style="left:1374.32px;top:613px;font-size:21.5px;font-weight:700;color:#1c2d3a;transform:scaleX(1.0283);">8.4M</div>
<div class="t" style="left:1764.99px;top:591px;font-size:11.5px;font-weight:400;color:#38464f;transform:scaleX(1.0094);">Production</div>
<div class="t" style="left:1747.51px;top:613px;font-size:21.5px;font-weight:700;color:#1c2d3a;transform:scaleX(1.0362);">108.8M</div>
<div class="t" style="left:94.10px;top:872px;font-size:9.6px;font-weight:400;color:#3d4b55;">0</div>
<div class="t" style="left:86.10px;top:846px;font-size:9.6px;font-weight:400;color:#3d4b55;">1M</div>
<div class="t" style="left:86.10px;top:820px;font-size:9.6px;font-weight:400;color:#3d4b55;">2M</div>
<div class="t" style="left:86.10px;top:794px;font-size:9.6px;font-weight:400;color:#3d4b55;">3M</div>
<div class="t" style="left:86.10px;top:768px;font-size:9.6px;font-weight:400;color:#3d4b55;">4M</div>
<div class="t" style="left:86.10px;top:742px;font-size:9.6px;font-weight:400;color:#3d4b55;">5M</div>
<div class="t" style="left:86.10px;top:716px;font-size:9.6px;font-weight:400;color:#3d4b55;">6M</div>
<div class="t" style="left:106.91px;top:888px;font-size:9.6px;font-weight:400;color:#3d4b55;transform:scaleX(0.9946);">Dec 4’23</div>
<div class="t" style="left:244.12px;top:888px;font-size:9.6px;font-weight:400;color:#3d4b55;transform:scaleX(1.0333);">Jan 1’24</div>
<div class="t" style="left:384.63px;top:888px;font-size:9.6px;font-weight:400;color:#3d4b55;">Jan 29</div>
<div class="t" style="left:520.05px;top:888px;font-size:9.6px;font-weight:400;color:#3d4b55;">Feb 26</div>
<div class="t" style="left:656.46px;top:888px;font-size:9.6px;font-weight:400;color:#3d4b55;">Mar 25</div>
<div class="t" style="left:794.38px;top:888px;font-size:9.6px;font-weight:400;color:#3d4b55;">Apr 22</div>
<div class="t" style="left:928.80px;top:888px;font-size:9.6px;font-weight:400;color:#3d4b55;">May 20</div>
<div class="t" style="left:1066.71px;top:888px;font-size:9.6px;font-weight:400;color:#3d4b55;">Jun 17</div>
<div class="t" style="left:1205.13px;top:888px;font-size:9.6px;font-weight:400;color:#3d4b55;">Jul 15</div>
<div class="t" style="left:1339.04px;top:888px;font-size:9.6px;font-weight:400;color:#3d4b55;">Aug 12</div>
<div class="t" style="left:1477.46px;top:888px;font-size:9.6px;font-weight:400;color:#3d4b55;">Sep 9</div>
<div class="t" style="left:1615.38px;top:888px;font-size:9.6px;font-weight:400;color:#3d4b55;">Oct 7</div>
<div class="t" style="left:1750.29px;top:888px;font-size:9.6px;font-weight:400;color:#3d4b55;">Nov 4</div>
<div class="t" style="left:1886.71px;top:888px;font-size:9.6px;font-weight:400;color:#3d4b55;">Dec 2</div>
<div class="t" style="left:1933.40px;top:793px;font-size:10px;font-weight:400;color:#3d4b55;transform:scaleX(0.9000);">avg</div>
<div class="t" style="left:931.90px;top:907px;font-size:9.8px;font-weight:400;color:#3d4b55;transform:scaleX(0.9006);">(GMT-07:00) Pacific Time (US &amp; Canada)</div>
<div class="t" style="left:63.70px;top:942px;font-size:11.2px;font-weight:600;color:#1e2d38;transform:scaleX(0.9251);">Task breakdown by environments</div>
<div class="t" style="left:1848.60px;top:941px;font-size:11.2px;font-weight:400;color:#3a4852;">Sort by</div>
<div class="t" style="left:1885.70px;top:941px;font-size:11.2px;font-weight:700;color:#1e2b35;transform:scaleX(0.9000);">Most tasks used</div>
<div class="t" style="left:73.26px;top:976px;font-size:11.2px;font-weight:600;color:#1e2b35;transform:scaleX(0.9382);">Environment</div>
<div class="t" style="left:1023.30px;top:976px;font-size:11.2px;font-weight:600;color:#1e2b35;transform:scaleX(0.8903);">Tasks</div>
<div class="t" style="left:79.00px;top:1011px;font-size:9.8px;font-weight:700;color:#6c172b;transform:scaleX(0.9157);">Production</div>
<div class="t" style="left:79.00px;top:1046px;font-size:9.8px;font-weight:700;color:#1f2b80;transform:scaleX(0.9113);">Development</div>
<div class="t" style="left:79.00px;top:1081px;font-size:9.8px;font-weight:700;color:#574408;transform:scaleX(0.8250);">Test</div>
<div class="t" style="left:1022.29px;top:1010px;font-size:10.8px;font-weight:600;color:#1e2b35;transform:scaleX(1.0057);">108.8M</div>
<div class="t" style="left:1022.28px;top:1046px;font-size:10.8px;font-weight:600;color:#1e2b35;transform:scaleX(1.0207);">12.9M</div>
<div class="t" style="left:1023.30px;top:1080px;font-size:10.8px;font-weight:600;color:#1e2b35;transform:scaleX(0.9750);">8.4M</div>
<div class="t" style="left:42.14px;top:1204px;font-size:12.5px;font-weight:700;color:#5b6c79;transform:scaleX(0.9611);">HVR recipe details</div>
<div class="t" style="left:42.70px;top:1222px;font-size:11.5px;font-weight:400;color:#2e3c47;transform:scaleX(0.9417);">Any recipe that consumes more than 4 million tasks in a billing cycle, will reset in next billing cycle.</div>
<div class="t" style="left:52.63px;top:1266px;font-size:10.8px;font-weight:600;color:#1e2b35;transform:scaleX(0.9662);">Recipe name</div>
<div class="t" style="left:970.80px;top:1266px;font-size:10.8px;font-weight:600;color:#1e2b35;transform:scaleX(0.9695);">Current tier</div>
<div class="t" style="left:1276.01px;top:1266px;font-size:10.8px;font-weight:600;color:#1e2b35;transform:scaleX(0.9908);">Environment</div>
<div class="t" style="left:1382.30px;top:1266px;font-size:10.8px;font-weight:600;color:#1e2b35;transform:scaleX(0.9609);">Converted on</div>
<div class="t" style="left:1687.32px;top:1266px;font-size:10.8px;font-weight:600;color:#1e2b35;transform:scaleX(0.9824);">Non-billable tasks</div>
<div class="t" style="left:89.80px;top:1300px;font-size:10.8px;font-weight:700;color:#1b2731;transform:scaleX(0.9823);">[tech_analytics-support] Board Members to iLevel API</div>
<div class="t" style="left:100.36px;top:1316px;font-size:11.2px;font-weight:400;color:#6b7a85;transform:scaleX(0.9354);">iLevel API</div>
<div class="t" style="left:971.00px;top:1300px;font-size:11.0px;font-weight:400;color:#2a3640;transform:scaleX(0.9240);">Tier 3 (&gt;= 30M tasks)</div>
<div class="t" style="left:1282.40px;top:1300px;font-size:9.8px;font-weight:700;color:#1f2b80;transform:scaleX(0.9113);">Development</div>
<div class="t" style="left:1382.30px;top:1300px;font-size:10.8px;font-weight:400;color:#2a3640;transform:scaleX(0.9400);">Apr 27, 2024 12:00 AM</div>
<div class="t" style="left:1688.30px;top:1300px;font-size:10.8px;font-weight:400;color:#2a3640;transform:scaleX(0.9793);">53.3M</div>
<div class="t" style="left:89.80px;top:1352px;font-size:10.8px;font-weight:700;color:#1b2731;transform:scaleX(0.9765);">Zuora Automation - Charge Retry</div>
<div class="t" style="left:100.35px;top:1368px;font-size:11.2px;font-weight:400;color:#6b7a85;transform:scaleX(0.9507);">Purchase Flow</div>
<div class="t" style="left:971.00px;top:1352px;font-size:11.0px;font-weight:400;color:#2a3640;transform:scaleX(0.9328);">Tier 2 (15M - 30M tasks)</div>
<div class="t" style="left:1282.40px;top:1352px;font-size:9.8px;font-weight:700;color:#6c172b;transform:scaleX(0.9137);">Production</div>
<div class="t" style="left:1381.36px;top:1352px;font-size:10.8px;font-weight:400;color:#2a3640;transform:scaleX(0.9448);">Mar 4, 2024 12:00 AM</div>
<div class="t" style="left:1688.30px;top:1352px;font-size:10.8px;font-weight:400;color:#2a3640;transform:scaleX(0.9793);">20.3M</div>
<div class="t" style="left:89.80px;top:1404px;font-size:10.8px;font-weight:700;color:#1b2731;transform:scaleX(0.9770);">Update Invoice Request - Slack Notification</div>
<div class="t" style="left:100.31px;top:1420px;font-size:11.2px;font-weight:400;color:#6b7a85;transform:scaleX(0.9881);">Subscription &amp; Invoicing</div>
<div class="t" style="left:971.00px;top:1404px;font-size:11.0px;font-weight:400;color:#2a3640;transform:scaleX(0.9328);">Tier 2 (15M - 30M tasks)</div>
<div class="t" style="left:1282.40px;top:1404px;font-size:9.8px;font-weight:700;color:#6c172b;transform:scaleX(0.9137);">Production</div>
<div class="t" style="left:1382.30px;top:1403px;font-size:10.8px;font-weight:400;color:#2a3640;transform:scaleX(0.9366);">Aug 12, 2024 12:00 AM</div>
<div class="t" style="left:1687.29px;top:1403px;font-size:10.8px;font-weight:400;color:#2a3640;transform:scaleX(1.0143);">15.3M</div>
<div class="t" style="left:89.80px;top:1455px;font-size:10.8px;font-weight:700;color:#1b2731;transform:scaleX(0.9708);">Zuora Automation - Change Subscription Plan</div>
<div class="t" style="left:100.31px;top:1472px;font-size:11.2px;font-weight:400;color:#6b7a85;transform:scaleX(0.9881);">Subscription &amp; Invoicing</div>
<div class="t" style="left:971.00px;top:1455px;font-size:11.0px;font-weight:400;color:#2a3640;transform:scaleX(0.9257);">Tier 1 (4M - 15M tasks)</div>
<div class="t" style="left:1282.40px;top:1456px;font-size:9.8px;font-weight:700;color:#6c172b;transform:scaleX(0.9137);">Production</div>
<div class="t" style="left:1381.35px;top:1455px;font-size:10.8px;font-weight:400;color:#2a3640;transform:scaleX(0.9450);">Mar 22, 2024 12:00 AM</div>
<div class="t" style="left:1688.30px;top:1455px;font-size:10.8px;font-weight:400;color:#2a3640;transform:scaleX(0.9696);">9.7M</div>
<div class="t" style="left:89.80px;top:1507px;font-size:10.8px;font-weight:700;color:#1b2731;transform:scaleX(0.9614);">Zuora Automation - MC First Purchase</div>
<div class="t" style="left:100.35px;top:1524px;font-size:11.2px;font-weight:400;color:#6b7a85;transform:scaleX(0.9534);">Purchase Flow</div>
<div class="t" style="left:971.00px;top:1507px;font-size:11.0px;font-weight:400;color:#2a3640;transform:scaleX(0.9257);">Tier 1 (4M - 15M tasks)</div>
<div class="t" style="left:1282.40px;top:1508px;font-size:9.8px;font-weight:700;color:#6c172b;transform:scaleX(0.9137);">Production</div>
<div class="t" style="left:1382.30px;top:1507px;font-size:10.8px;font-weight:400;color:#2a3640;transform:scaleX(0.9536);">Jun 12, 2024 12:00 AM</div>
<div class="t" style="left:1688.30px;top:1507px;font-size:10.8px;font-weight:400;color:#2a3640;transform:scaleX(0.9696);">4.2M</div>
<div class="t" style="left:88.82px;top:1559px;font-size:10.8px;font-weight:700;color:#1b2731;transform:scaleX(0.9766);">Invoice Automation - Create Invoices</div>
<div class="t" style="left:100.30px;top:1576px;font-size:11.2px;font-weight:400;color:#6b7a85;transform:scaleX(1.0049);">Invoicing Automation</div>
<div class="t" style="left:971.00px;top:1559px;font-size:11.0px;font-weight:400;color:#2a3640;transform:scaleX(0.9257);">Tier 1 (4M - 15M tasks)</div>
<div class="t" style="left:1282.40px;top:1560px;font-size:9.8px;font-weight:700;color:#1f2b80;transform:scaleX(0.9113);">Development</div>
<div class="t" style="left:1382.30px;top:1559px;font-size:10.8px;font-weight:400;color:#2a3640;transform:scaleX(0.9536);">Jun 11, 2024 12:00 AM</div>
<div class="t" style="left:1688.30px;top:1559px;font-size:10.8px;font-weight:400;color:#2a3640;transform:scaleX(0.9696);">4.1M</div>
</body></html>
